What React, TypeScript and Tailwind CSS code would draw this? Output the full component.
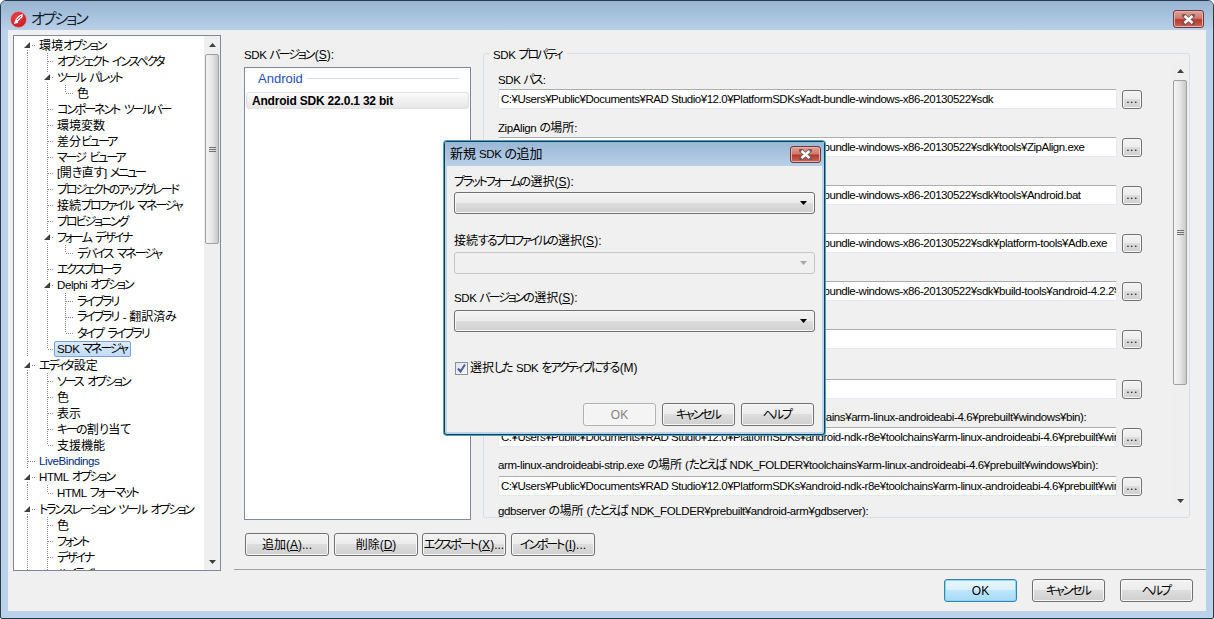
import React from 'react';

const btnBg = "bg-[linear-gradient(#f3f3f3_0%,#ececec_48%,#dddddd_50%,#cfcfcf_100%)]";

// kana and latin in the reference are the narrow Meiryo UI cuts, so squeeze those runs
const Jp: React.FC<{ t: string }> = ({ t }) => (
    <>
        {t.split(/([\u3040-\u30ff]+| |[!-~¥]+)/).map((part, i) => {
            if (i % 2 === 0) return <span key={i}>{part}</span>;
            if (part === " ") return <span key={i} className="inline-block w-[3px]" />;
            if (/[\u3040-\u30ff]/.test(part)) return <span key={i} className="tracking-[-2.1px] mr-[1.5px]">{part}</span>;
            return <span key={i} className="text-[11.5px] tracking-[-0.4px]">{part}</span>;
        })}
    </>
);

const Key: React.FC<{ k: string }> = ({ k }) => (
    <>(<span className="underline">{k}</span>)</>
);

const treeItems: { label: string; depth: number; open?: boolean; blue?: boolean; selected?: boolean }[] = [
    { label: "環境オプション", depth: 0, open: true },
    { label: "オブジェクト インスペクタ", depth: 1 },
    { label: "ツール パレット", depth: 1, open: true },
    { label: "色", depth: 2 },
    { label: "コンポーネント ツールバー", depth: 1 },
    { label: "環境変数", depth: 1 },
    { label: "差分ビューア", depth: 1 },
    { label: "マージ ビューア", depth: 1 },
    { label: "[開き直す] メニュー", depth: 1 },
    { label: "プロジェクトのアップグレード", depth: 1 },
    { label: "接続プロファイル マネージャ", depth: 1 },
    { label: "プロビジョニング", depth: 1 },
    { label: "フォーム デザイナ", depth: 1, open: true },
    { label: "デバイス マネージャ", depth: 2 },
    { label: "エクスプローラ", depth: 1 },
    { label: "Delphi オプション", depth: 1, open: true },
    { label: "ライブラリ", depth: 2 },
    { label: "ライブラリ - 翻訳済み", depth: 2 },
    { label: "タイプ ライブラリ", depth: 2 },
    { label: "SDK マネージャ", depth: 1, selected: true },
    { label: "エディタ設定", depth: 0, open: true },
    { label: "ソース オプション", depth: 1 },
    { label: "色", depth: 1 },
    { label: "表示", depth: 1 },
    { label: "キーの割り当て", depth: 1 },
    { label: "支援機能", depth: 1 },
    { label: "LiveBindings", depth: 0, blue: true },
    { label: "HTML オプション", depth: 0, open: true },
    { label: "HTML フォーマット", depth: 1 },
    { label: "トランスレーション ツール オプション", depth: 0, open: true },
    { label: "色", depth: 1 },
    { label: "フォント", depth: 1 },
    { label: "デザイナ", depth: 1 },
    { label: "ハイライト", depth: 1 },
];

const guideX = [13, 33, 51];
const textX = [25, 43, 63];

const hasNextSibling = (idx: number, depth: number) => {
    for (let i = idx + 1; i < treeItems.length; i++) {
        if (treeItems[i].depth < depth) return false;
        if (treeItems[i].depth === depth) return true;
    }
    return depth === 0 || depth === 1;
};

const TreeGuides: React.FC<{ idx: number }> = ({ idx }) => {
    const item = treeItems[idx];
    const x = guideX[item.depth];
    return (
        <svg width="62" height="16" className="shrink-0 absolute left-0 top-0">
            {guideX.map((gx, d) =>
                d < item.depth && hasNextSibling(idx, d) ? (
                    <line key={d} x1={gx + 0.5} x2={gx + 0.5} y1="0" y2="16" stroke="#8a8a8a" strokeDasharray="1 1" />
                ) : null
            )}
            {item.depth > 0 || !item.open ? (
                <>
                    <line x1={x + 0.5} x2={x + 0.5} y1="0" y2={hasNextSibling(idx, item.depth) ? 16 : 8} stroke="#8a8a8a" strokeDasharray="1 1" />
                    {!item.open && <line x1={x + 1} x2={textX[item.depth] - 3} y1="8.5" y2="8.5" stroke="#8a8a8a" strokeDasharray="1 1" />}
                </>
            ) : (
                <line x1={x + 0.5} x2={x + 0.5} y1="13" y2="16" stroke="#8a8a8a" strokeDasharray="1 1" />
            )}
            {item.open && (
                <>
                    <rect x={x - 3} y="3" width="8" height="10" fill="#ffffff" />
                    <path d={`M${x + 3} 5 V11 H${x - 3} Z`} fill="#404040" />
                    <line x1={x + 5} x2={textX[item.depth] - 3} y1="8.5" y2="8.5" stroke="#8a8a8a" strokeDasharray="1 1" />
                </>
            )}
        </svg>
    );
};

const Arrow: React.FC<{ up?: boolean; color?: string }> = ({ up, color = "#404040" }) => (
    <svg width="7" height="4" viewBox="0 0 7 4">
        <path d={up ? "M3.5 0 L7 4 H0 Z" : "M0 0 H7 L3.5 4 Z"} fill={color} />
    </svg>
);

const Scrollbar: React.FC<{ before: number; thumb: number; className?: string }> = ({ before, thumb, className }) => (
    <div className={`w-[16px] shrink-0 flex flex-col bg-[#efefef] ${className ?? ""}`}>
        <div className="h-[17px] flex items-center justify-center"><Arrow up /></div>
        <div style={{ height: before }} />
        <div
            style={{ height: thumb }}
            className="mx-px rounded-[2px] border border-[#a0a0a0] bg-[linear-gradient(90deg,#f4f4f4,#e6e6e6_50%,#c8c8c8)] flex flex-col items-center justify-center gap-px"
        >
            <div className="w-[7px] h-px bg-[#707070]" />
            <div className="w-[7px] h-px bg-[#707070]" />
            <div className="w-[7px] h-px bg-[#707070]" />
        </div>
        <div className="flex-1" />
        <div className="h-[17px] flex items-center justify-center"><Arrow /></div>
    </div>
);

const Btn: React.FC<{ className?: string; disabled?: boolean; children: React.ReactNode }> = ({ className, disabled, children }) => (
    <div
        className={`h-[23px] rounded-[3px] border flex items-center justify-center whitespace-nowrap shadow-[inset_0_0_0_1px_#f8f8f8] ${
            disabled ? "border-[#adb2b5] bg-[#f4f4f4] text-[#838383]" : `border-[#707070] ${btnBg}`
        } ${className ?? ""}`}
    >
        {children}
    </div>
);

const Select: React.FC<{ disabled?: boolean; className?: string }> = ({ disabled, className }) => (
    <div
        className={`h-[22px] rounded-[3px] border flex items-center justify-end pr-[7px] ${
            disabled ? "border-[#c6c6c6] bg-[#f0f0f0]" : `border-[#707070] shadow-[inset_0_0_0_1px_#f8f8f8] ${btnBg}`
        } ${className ?? ""}`}
    >
        <Arrow color={disabled ? "#a8a8a8" : "#000000"} />
    </div>
);

const CloseBtn: React.FC<{ className?: string }> = ({ className }) => (
    <div className={`rounded-[3px] border border-[#6b3a3a] flex items-center justify-center shadow-[inset_0_0_0_1px_#e8b0a8] bg-[linear-gradient(#e0a096_0%,#d07a6e_45%,#b5392b_55%,#c9685a_100%)] ${className ?? ""}`}>
        <svg width="13" height="11" viewBox="0 0 13 11">
            <path d="M2 1.5 L11 9.5 M11 1.5 L2 9.5" stroke="#6e5a58" strokeWidth="4" strokeLinecap="round" />
            <path d="M2.5 2 L10.5 9 M10.5 2 L2.5 9" stroke="#ffffff" strokeWidth="2.4" />
        </svg>
    </div>
);

const base = "C:¥Users¥Public¥Documents¥RAD Studio¥12.0¥PlatformSDKs¥";
const sdk = base + "adt-bundle-windows-x86-20130522¥sdk";
const ndkTools = base + "android-ndk-r8e¥toolchains¥arm-linux-androideabi-4.6¥prebuilt¥windows¥bin";

const props = [
    { label: "SDK パス:", value: sdk, h: "h-[48px]", lab: "h-[17px] pt-px" },
    { label: "ZipAlign の場所:", value: sdk + "¥tools¥ZipAlign.exe", h: "h-[48px]", lab: "h-[17px] pt-px" },
    { label: "Android の場所:", value: sdk + "¥tools¥Android.bat", h: "h-[48px]", lab: "h-[17px] pt-px" },
    { label: "Adb の場所:", value: sdk + "¥platform-tools¥Adb.exe", h: "h-[48px]", lab: "h-[17px] pt-px" },
    { label: "Aapt の場所:", value: sdk + "¥build-tools¥android-4.2.2¥Aapt.exe", h: "h-[48px]", lab: "h-[17px] pt-px" },
    { label: "SDK API レベルの場所:", value: "", h: "h-[50px]", lab: "h-[17px] pt-px" },
    { label: "NDK ベース パス:", value: "", h: "h-[48px]", lab: "h-[17px] pt-px" },
    { label: "arm-linux-androideabi-ld.exe の場所 (たとえば NDK_FOLDER¥toolchains¥arm-linux-androideabi-4.6¥prebuilt¥windows¥bin):", value: ndkTools + "¥arm-linux-androideabi-ld.exe", h: "h-[49px]", lab: "h-[17px]" },
    { label: "arm-linux-androideabi-strip.exe の場所 (たとえば NDK_FOLDER¥toolchains¥arm-linux-androideabi-4.6¥prebuilt¥windows¥bin):", value: ndkTools + "¥arm-linux-androideabi-strip.exe", h: "h-[48px]", lab: "h-[18px] -mt-px" },
    { label: "gdbserver の場所 (たとえば NDK_FOLDER¥prebuilt¥android-arm¥gdbserver):", value: "", h: "h-[17px] -mt-[2px]", lab: "h-[17px]" },
];

const Tree: React.FC = () => (
    <div className="w-[208px] h-[536px] border border-[#82879b] bg-white flex overflow-hidden shrink-0">
        <div className="flex-1 pt-px overflow-hidden">
            {treeItems.map((item, idx) => (
                <div key={idx} className="relative h-4 flex items-center whitespace-nowrap" style={{ paddingLeft: textX[item.depth] - 3 }}>
                    <TreeGuides idx={idx} />
                    <span
                        className={`relative px-[2px] pt-px h-4 flex items-center rounded-[2px] border ${
                            item.selected
                                ? "border-[#7da2ce] bg-[linear-gradient(#dcebfc,#c1dbfc)]"
                                : "border-transparent"
                        } ${item.blue ? "text-[#002a7a]" : ""}`}
                    >
                        <span><Jp t={item.label} /></span>
                    </span>
                </div>
            ))}
        </div>
        <Scrollbar before={1} thumb={190} />
    </div>
);

const SdkList: React.FC = () => (
    <div className="w-[227px] shrink-0">
        <div className="h-[19px] leading-[14px]"><Jp t="SDK バージョン" /><Key k="S" />:</div>
        <div className="h-[453px] border border-[#82879b] bg-white">
            <div className="h-[24px] flex items-center pl-[13px] pr-[11px] pb-[3px] gap-1 text-[#1f4fc0]">
                <span className="text-[13px]">Android</span>
                <div className="flex-1 h-px bg-[#d3dce8]" />
            </div>
            <div className="mx-px h-[17px] rounded-[3px] border border-[#e2e2e2] bg-[linear-gradient(#fafafa,#e6e6e6)] flex items-center pl-[5px] font-bold tracking-[-0.2px]">
                Android SDK 22.0.1 32 bit
            </div>
        </div>
    </div>
);

const PropertyGroup: React.FC = () => (
    <div className="relative w-[707px] h-[465px] mt-[5px] ml-[12px] border border-[#d5dfe5] rounded-[3px] flex">
        <div className="absolute left-[5px] -top-[6px] px-1 bg-[#f0f0f0] leading-[14px]"><Jp t="SDK プロパティ" /></div>
        <div className="flex-1 min-w-0 pl-[14px] pt-[18px] overflow-hidden">
            {props.map((p, i) => (
                <div key={i} className={p.h}>
                    <div className={`${p.lab} leading-[14px] whitespace-nowrap`}><Jp t={p.label} /></div>
                    {i < 9 && (
                        <div className="flex gap-[5px] items-start">
                            <div className="w-[619px] h-[20px] pl-[2px] border border-[#e3e9ef] border-t-[#abadb3] rounded-[2px] bg-white overflow-hidden whitespace-nowrap leading-[19px] text-[11.5px] tracking-[-0.47px]">
                                {p.value}
                            </div>
                            <Btn className="w-[20px] !h-[19px] mt-px pb-[2px] text-[12px] tracking-[0.5px]">...</Btn>
                        </div>
                    )}
                </div>
            ))}
        </div>
        <Scrollbar before={1} thumb={305} className="my-[8px] mr-px" />
    </div>
);

const AddSdkDialog: React.FC = () => (
    <div className="absolute left-[444px] top-[141px] w-[381px] h-[294px] rounded-[3px] border border-[#1d3a4c] shadow-[0_0_0_1px_#3fa7c9] bg-[#bcd3e9] flex flex-col">
        <div className="relative h-[24px] shrink-0 pl-[5px] flex items-center text-[13px] bg-[linear-gradient(#9ab7d6,#b8d0e8)]">
            <span><Jp t="新規 SDK の追加" /></span>
            <CloseBtn className="absolute right-[3px] top-[4px] w-[31px] h-[17px]" />
        </div>
        <div className="flex-1 mx-[2px] mb-[2px] bg-[#f0f0f0] px-[7px]">
            <div className="h-[26px] pt-[9px] leading-[14px]"><Jp t="プラットフォームの選択" /><Key k="S" />:</div>
            <Select />
            <div className="h-[38px] pt-[20px] leading-[14px]"><Jp t="接続するプロファイルの選択" /><Key k="S" />:</div>
            <Select disabled />
            <div className="h-[36px] pt-[17px] leading-[14px]"><Jp t="SDK バージョンの選択" /><Key k="S" />:</div>
            <Select />
            <div className="mt-[29px] flex items-center gap-[2px] h-[14px] pl-px">
                <div className="w-[13px] h-[13px] border border-[#8e8f8f] bg-[linear-gradient(135deg,#dfe6f0,#f4f6fa)] flex items-center justify-center">
                    <svg width="11" height="11" viewBox="0 0 11 11">
                        <path d="M2 5.5 L4.5 8.5 L9 1.5" fill="none" stroke="#4a5f97" strokeWidth="2" />
                    </svg>
                </div>
                <span><Jp t="選択した SDK をアクティブにする" />(M)</span>
            </div>
            <div className="mt-[28px] flex justify-end gap-[6px] pr-px">
                <Btn disabled className="w-[73px]">OK</Btn>
                <Btn className="w-[73px]"><span><Jp t="キャンセル" /></span></Btn>
                <Btn className="w-[73px]"><span><Jp t="ヘルプ" /></span></Btn>
            </div>
        </div>
    </div>
);

export default function App() {
    return (
        <div className="relative w-[1214px] h-[619px] overflow-hidden bg-white font-['Liberation_Sans','Noto_Sans_CJK_JP',sans-serif] text-[12px] text-black [font-feature-settings:'palt']">
            <div className="w-full h-full rounded-t-[6px] rounded-b-[2px] border border-[#2a3a48] bg-[#bad3ea] flex flex-col">
                {/* title bar */}
                <div className="relative h-[29px] shrink-0 bg-[linear-gradient(#98b4d2,#b8d0e8)] rounded-t-[5px] flex items-center pl-[9px] pt-[7px] gap-[4px] text-[15px]">
                    <svg width="17" height="17" viewBox="0 0 17 17">
                        <defs>
                            <radialGradient id="delphiRed" cx="0.4" cy="0.35" r="0.7">
                                <stop offset="0" stopColor="#e8434a" />
                                <stop offset="1" stopColor="#c21a24" />
                            </radialGradient>
                        </defs>
                        <circle cx="8.5" cy="8.5" r="8" fill="url(#delphiRed)" stroke="#e8a0a4" strokeWidth="0.8" />
                        <path d="M4 13 C5 8 8 4 13 3 C12 5 13 6 12 7 C10 7 10 8 11 9 C9 10 8 10 8 12 C6 12 5 13 4 13 Z" fill="#ffffff" />
                        <path d="M7 9 L11 5 M8 11 L11 8" stroke="#d9252e" strokeWidth="1" />
                    </svg>
                    <span className="text-[#10202c]"><Jp t="オプション" /></span>
                    <CloseBtn className="absolute right-[9px] top-[9px] w-[31px] h-[18px]" />
                </div>
                {/* client area */}
                <div className="flex-1 mx-[7px] mb-[7px] bg-[#f0f0f0] flex pl-[5px] pt-[5px]">
                    <Tree />
                    <div className="flex-1 min-w-0 ml-[13px] -mt-[5px] flex flex-col">
                        <div className="flex pl-[10px] pt-[18px]">
                            <SdkList />
                            <PropertyGroup />
                        </div>
                        <div className="flex pl-[11px] mt-[13px]">
                            <Btn className="w-[84px]"><span><Jp t="追加" /><Key k="A" />...</span></Btn>
                            <Btn className="w-[84px] ml-[5px]"><span><Jp t="削除" /><Key k="D" /></span></Btn>
                            <Btn className="w-[84px] ml-[4px]"><span><Jp t="エクスポート" /><Key k="X" />...</span></Btn>
                            <Btn className="w-[84px] ml-[5px]"><span><Jp t="インポート" /><Key k="I" />...</span></Btn>
                        </div>
                        <div className="h-px bg-[#a0a0a0] mt-[13px]" />
                        <div className="flex justify-end gap-[15px] pr-[13px] mt-[9px]">
                            <Btn className="w-[73px] !border-[#3c7fb1] !shadow-[inset_0_0_0_1px_#7fdcf8] !bg-[linear-gradient(#eaf6fd,#d9f0fc_48%,#bee6fd_50%,#a7d9f5)]">OK</Btn>
                            <Btn className="w-[73px]"><span><Jp t="キャンセル" /></span></Btn>
                            <Btn className="w-[73px]"><span><Jp t="ヘルプ" /></span></Btn>
                        </div>
                    </div>
                </div>
            </div>
            <AddSdkDialog />
        </div>
    );
}
